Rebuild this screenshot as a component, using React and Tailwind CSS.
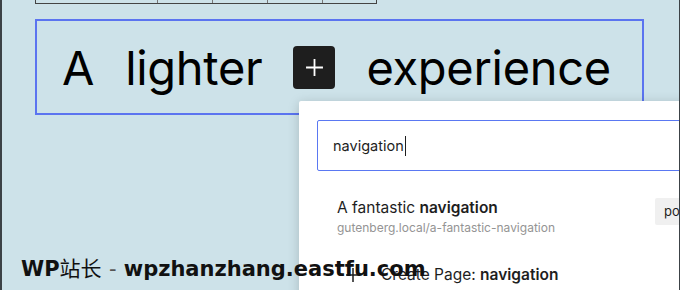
import React from 'react';

const Plus = ({ className }) => (
  <svg viewBox="0 0 24 24" className={className} fill="none" stroke="currentColor" strokeWidth="1.5">
    <path d="M12 5v14M5 12h14" />
  </svg>
);

export default function App() {
  return (
    <div className="relative w-[680px] h-[290px] overflow-hidden bg-[#cde2e9] border-l-2 border-r border-[#3c4246] font-['Inter',sans-serif]">
      {/* table stub at the top */}
      <div className="ml-[33px] w-[342px] h-[4px] flex border border-t-0 border-[#444]">
        <div className="w-[122px] border-r border-[#777]" />
        <div className="w-[55px] border-r border-[#777]" />
        <div className="w-[55px] border-r border-[#777]" />
        <div className="w-[55px] border-r border-[#777]" />
        <div className="flex-1" />
      </div>

      {/* heading block */}
      <div className="ml-[33px] mt-[15px] w-[609px] h-[96px] border-2 border-[#5b74f0] flex items-center pl-[25px] gap-[31px] text-[47px] leading-none text-black tracking-[-0.3px]">
        <span>A</span>
        <span>lighter</span>
        <span className="w-[42px] h-[43px] rounded-[4px] bg-[#1e1e1e] text-white flex items-center justify-center">
          <Plus className="w-[29px] h-[29px]" />
        </span>
        <span>experience</span>
      </div>

      {/* link popover */}
      <div className="absolute left-[297px] top-[101px] w-[400px] h-[200px] bg-white rounded-tl-[2px] shadow-[0_2px_12px_rgba(0,0,0,0.18)]">
        <div className="ml-[18px] mt-[19px] h-[51px] border-[1.5px] border-[#5a78f2] rounded-[2px] flex items-center pl-[15px] text-[14.5px] text-[#1e1e1e]">
          navigation
          <span className="w-px h-[20px] bg-[#1e1e1e] ml-[1px]" />
        </div>
        <div className="flex items-start mt-[27px]">
          <div className="ml-[38px] w-[318px]">
            <div className="text-[15.5px] leading-[20px] text-[#1e1e1e]">
              A fantastic <span className="font-semibold">navigation</span>
            </div>
            <div className="text-[12px] leading-[18px] text-[#949494] mt-[1px]">gutenberg.local/a-fantastic-navigation</div>
          </div>
          <div className="w-[44px] h-[27px] bg-[#f0f0f0] rounded-l-[2px] pl-[9px] flex items-center text-[13px] text-[#1e1e1e]">po</div>
        </div>
        <div className="flex items-center mt-[26px] ml-[42px] text-[15.5px] text-[#1e1e1e]">
          <Plus className="w-[24px] h-[24px] text-[#1e1e1e]" />
          <span className="ml-[16px]">Create Page: <span className="font-semibold">navigation</span></span>
        </div>
      </div>

      {/* watermark */}
      <div className="absolute left-[19px] top-[254px] text-[21px] font-bold text-[#111] font-['DejaVu_Sans','Noto_Sans_CJK_SC',sans-serif] whitespace-nowrap">
        WP<span className="font-normal">站长</span> <span className="font-normal text-[#555]">-</span> wpzhanzhang.eastfu.com
      </div>
    </div>
  );
}
